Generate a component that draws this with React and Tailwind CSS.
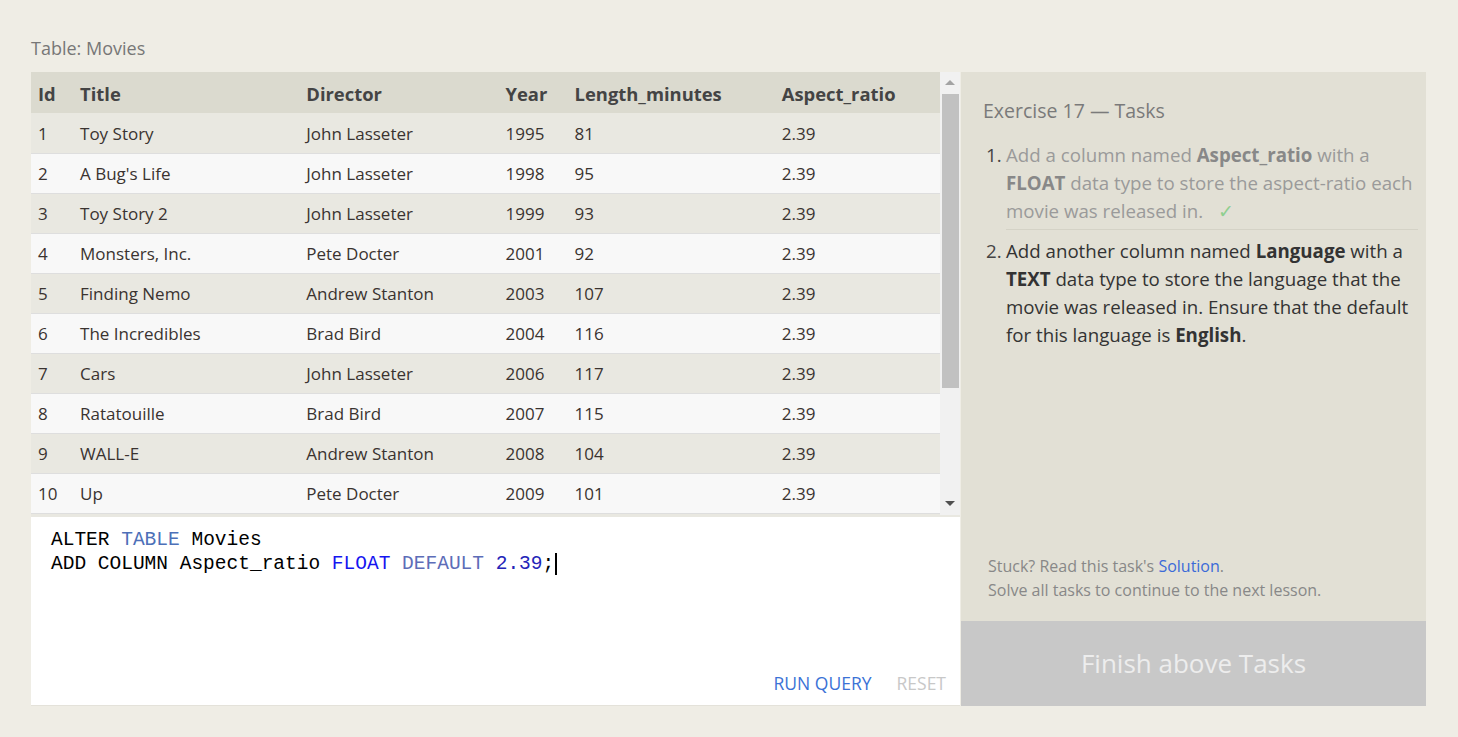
import React from 'react';

const movies = [
    [1, 'Toy Story', 'John Lasseter', 1995, 81],
    [2, "A Bug's Life", 'John Lasseter', 1998, 95],
    [3, 'Toy Story 2', 'John Lasseter', 1999, 93],
    [4, 'Monsters, Inc.', 'Pete Docter', 2001, 92],
    [5, 'Finding Nemo', 'Andrew Stanton', 2003, 107],
    [6, 'The Incredibles', 'Brad Bird', 2004, 116],
    [7, 'Cars', 'John Lasseter', 2006, 117],
    [8, 'Ratatouille', 'Brad Bird', 2007, 115],
    [9, 'WALL-E', 'Andrew Stanton', 2008, 104],
    [10, 'Up', 'Pete Docter', 2009, 101],
];

const font = { fontFamily: '"Open Sans", "Noto Sans", sans-serif' };

const Scrollbar = () => (
    <div className="w-[20px] shrink-0 bg-[#f1f1f1] flex flex-col items-center">
        <div className="h-[20px] flex items-center justify-center">
            <div className="w-0 h-0 border-l-[5px] border-r-[5px] border-b-[5px] border-l-transparent border-r-transparent border-b-[#a3a3a3]"></div>
        </div>
        <div className="w-[17px] h-[294px] bg-[#c1c1c1] mt-[2px]"></div>
        <div className="flex-1"></div>
        <div className="h-[20px] flex items-center justify-center mb-[2px]">
            <div className="w-0 h-0 border-l-[5px] border-r-[5px] border-t-[5px] border-l-transparent border-r-transparent border-t-[#505050]"></div>
        </div>
    </div>
);

const MoviesTable = () => (
    <div className="flex h-[443px] overflow-hidden">
        <div className="flex-1 overflow-hidden bg-[#e9e8e1]">
            <table className="w-full table-fixed border-collapse text-[17px] text-[#3a3330]">
                <colgroup>
                    <col className="w-[42px]" />
                    <col className="w-[226px]" />
                    <col className="w-[199px]" />
                    <col className="w-[69px]" />
                    <col className="w-[207px]" />
                    <col className="w-[165px]" />
                </colgroup>
                <thead>
                    <tr className="bg-[#dbdacf] text-[#444] text-[18.4px] h-[41px]">
                        <th className="text-left pl-[7px] pt-[3px] font-bold">Id</th>
                        <th className="text-left pl-[7px] pt-[3px] font-bold">Title</th>
                        <th className="text-left pl-[7px] pt-[3px] font-bold">Director</th>
                        <th className="text-left pl-[7px] pt-[3px] font-bold">Year</th>
                        <th className="text-left pl-[7px] pt-[3px] font-bold">Length_minutes</th>
                        <th className="text-left pl-[7px] pt-[3px] font-bold">Aspect_ratio</th>
                    </tr>
                </thead>
                <tbody>
                    {movies.map((m, i) => (
                        <tr key={m[0]} className={`h-[40px] border-b border-[#dedede] ${i % 2 === 0 ? 'bg-[#e9e8e1]' : 'bg-[#f8f8f8]'}`}>
                            <td className="pl-[7px] pt-[1px]">{m[0]}</td>
                            <td className="pl-[7px] pt-[1px]">{m[1]}</td>
                            <td className="pl-[7px] pt-[1px]">{m[2]}</td>
                            <td className="pl-[7px] pt-[1px]">{m[3]}</td>
                            <td className="pl-[7px] pt-[1px]">{m[4]}</td>
                            <td className="pl-[7px] pt-[1px]">2.39</td>
                        </tr>
                    ))}
                </tbody>
            </table>
        </div>
        <Scrollbar />
    </div>
);

const Editor = () => (
    <div className="flex-1 bg-white flex flex-col border-b border-[#e4e2da]">
        <div className="px-[20px] pt-[11px] text-[19.5px] leading-[24px] text-black" style={{ fontFamily: '"Liberation Mono", "DejaVu Sans Mono", monospace' }}>
            <div>ALTER <span className="text-[#4d70b8]">TABLE</span> Movies</div>
            <div className="flex items-center">
                <span>ADD COLUMN Aspect_ratio <span className="text-[#1515f0]">FLOAT</span> <span className="text-[#5d6db8]">DEFAULT</span> <span className="text-[#2424b8]">2.39</span>;</span>
                <span className="inline-block w-[2px] h-[22px] bg-black ml-[1px]"></span>
            </div>
        </div>
        <div className="flex-1"></div>
        <div className="flex justify-end gap-[25px] pr-[14px] pb-[9px] text-[17.5px]">
            <span className="text-[#3b72d6]">RUN QUERY</span>
            <span className="text-[#c8c8c8]">RESET</span>
        </div>
    </div>
);

const TasksPanel = () => (
    <div className="w-[465px] flex flex-col bg-[#e2e0d5]">
        <div className="flex-1 pl-[22px] pr-[8px] pt-[24px]">
            <h3 className="text-[19.5px] text-[#7a7a7a]">Exercise 17 — Tasks</h3>
            <ol className="mt-[16px] text-[18.7px] leading-[28px]">
                <li className="flex text-[#9a9a9a]">
                    <span className="w-[23px] pl-[3px] shrink-0 text-[#444]">1.</span>
                    <div className="pb-[4px] border-b border-[#d4d2c6] flex-1">
                        Add a column named <b className="text-[#888]">Aspect_ratio</b> with a <b className="text-[#888]">FLOAT</b> data type to store the aspect-ratio each movie was released in. <span className="text-[#8fcf8f] ml-[10px]">✓</span>
                    </div>
                </li>
                <li className="flex text-[#333] mt-[7px]">
                    <span className="w-[23px] pl-[3px] shrink-0 text-[#444]">2.</span>
                    <div className="flex-1">
                        Add another column named <b>Language</b> with a <b>TEXT</b> data type to store the language that the movie was released in. Ensure that the default for this language is <b>English</b>.
                    </div>
                </li>
            </ol>
        </div>
        <div className="px-[27px] pb-[19px] text-[16px] leading-[24px] text-[#888]">
            <p>Stuck? Read this task's <span className="text-[#3b6ad8]">Solution</span>.</p>
            <p>Solve all tasks to continue to the next lesson.</p>
        </div>
        <div className="h-[85px] bg-[#c8c8c8] flex items-center justify-center text-[26px] text-[#ededed]">
            Finish above Tasks
        </div>
    </div>
);

export default function App() {
    return (
        <div className="min-h-[737px] bg-[#efede5] pl-[31px] pr-[32px]" style={font}>
            <div className="pt-[35px] h-[72px] text-[18px] text-[#777]">Table: Movies</div>
            <div className="flex h-[634px] gap-[1px]">
                <div className="w-[929px] flex flex-col">
                    <MoviesTable />
                    <div className="h-[2px] bg-[#e9e8e1]"></div>
                    <Editor />
                </div>
                <TasksPanel />
            </div>
        </div>
    );
}
